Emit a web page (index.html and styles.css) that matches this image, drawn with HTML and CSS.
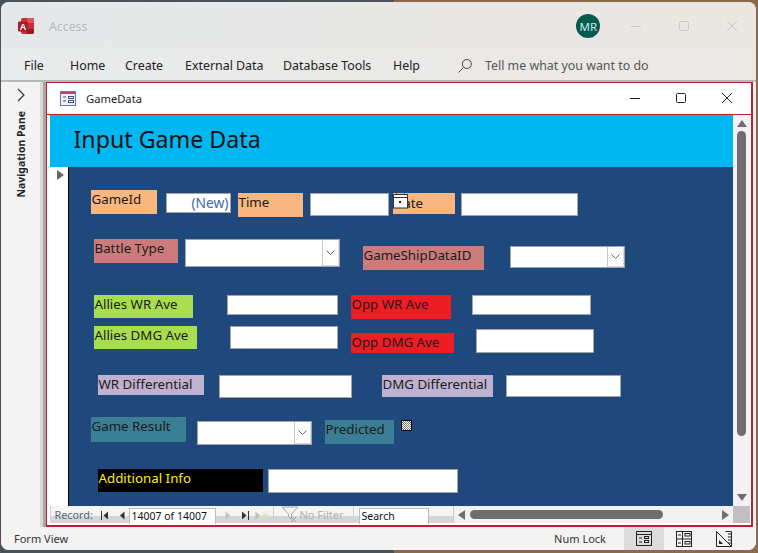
FILE: index.html
```html
<!DOCTYPE html>
<html lang="en">
<head>
<meta charset="utf-8">
<title>Access</title>
<link rel="stylesheet" href="styles.css">
</head>
<body>
<div class="app">
  <header class="titlebar">
    <svg class="logo" width="18" height="18" viewBox="0 0 18 18">
      <path d="M4 2.500 Q4 1 5.500 1 H16 Q17 1 17 2 V15 Q17 17 15 17 H6 Q4 17 4 15Z" fill="#c8303a"/>
      <path d="M10 1 H16 Q17 1 17 2 V6 H10Z" fill="#e0555c"/>
      <path d="M10 12 H17 V15 Q17 17 15 17 H10Z" fill="#8e1a24"/>
      <rect x="1" y="4.500" width="10" height="10" rx="1" fill="#a81c28"/>
      <text x="6" y="13" class="logo-letter" text-anchor="middle">A</text>
    </svg>
    <span class="app-name">Access</span>
    <span class="avatar">MR</span>
    <div class="win-controls">
      <svg width="12" height="12" viewBox="0 0 12 12"><path d="M1 6.500H11" stroke="#c9c9c7" fill="none"/></svg>
      <svg width="12" height="12" viewBox="0 0 12 12"><rect x="1.500" y="1.500" width="9" height="9" rx="1" stroke="#c9c9c7" fill="none"/></svg>
      <svg width="12" height="12" viewBox="0 0 12 12"><path d="M1 1L11 11M11 1L1 11" stroke="#c9c9c7" fill="none"/></svg>
    </div>
  </header>
  <nav class="ribbon">
    <span class="tab tab-file">File</span>
    <span class="tab tab-home">Home</span>
    <span class="tab tab-create">Create</span>
    <span class="tab tab-ext">External Data</span>
    <span class="tab tab-db">Database Tools</span>
    <span class="tab tab-help">Help</span>
    <svg class="search-icon" width="16" height="16" viewBox="0 0 16 16"><circle cx="9.800" cy="6" r="4.500" fill="none" stroke="#444"/><path d="M6.500 9.500L1.500 14.500" stroke="#444" fill="none"/></svg>
    <span class="tell">Tell me what you want to do</span>
  </nav>
  <main class="workspace">
    <aside class="navpane">
      <svg class="nav-chevron" width="8" height="14" viewBox="0 0 8 14"><path d="M1 1L7 7L1 13" fill="none" stroke="#333" stroke-width="1.200"/></svg>
      <span class="nav-label">Navigation Pane</span>
    </aside>
    <div class="nav-split"></div>
    <section class="formwin">
      <div class="formtitle">
        <svg class="form-icon" width="16" height="15" viewBox="0 0 16 15">
          <rect x="0.500" y="0.500" width="15" height="14" fill="#eef0f8" stroke="#6d78a0"/>
          <rect x="1" y="1" width="14" height="2" fill="#c2406a"/>
          <path d="M3 6H6M3 10H6" stroke="#44507a"/>
          <rect x="8.500" y="5.500" width="5" height="2" fill="#fff" stroke="#44507a"/>
          <rect x="8.500" y="9.500" width="5" height="2" fill="#fff" stroke="#44507a"/>
        </svg>
        <span class="form-name">GameData</span>
        <div class="form-controls">
          <svg width="12" height="12" viewBox="0 0 12 12"><path d="M1 6.500H11" stroke="#222" fill="none"/></svg>
          <svg width="12" height="12" viewBox="0 0 12 12"><rect x="1.500" y="1.500" width="9" height="9" rx="1" stroke="#222" fill="none"/></svg>
          <svg width="12" height="12" viewBox="0 0 12 12"><path d="M1 1L11 11M11 1L1 11" stroke="#222" fill="none"/></svg>
        </div>
      </div>
      <div class="formbody">
        <div class="content">
          <div class="form-main">
            <div class="form-header">Input Game Data</div>
            <div class="detail">
              <div class="selector"><span class="selector-arrow"></span></div>
              <div class="canvas">
                <span class="lbl orange l-gameid">GameId</span>
                <span class="field f-new">(New)</span>
                <span class="lbl orange l-time">Time</span>
                <span class="field f-time"></span>
                <span class="lbl orange l-date">Date</span>
                <svg class="calendar" width="16" height="16" viewBox="0 0 16 16">
                  <rect x="0.500" y="1.500" width="14" height="13.500" fill="#fff" stroke="#333"/>
                  <path d="M1 4.500H14" stroke="#333"/>
                  <path d="M3.500 0.500V2M11.500 0.500V2" stroke="#333"/>
                  <rect x="6" y="8" width="2" height="2" fill="#222"/>
                </svg>
                <span class="field f-date"></span>
                <span class="lbl rose l-battle">Battle Type</span>
                <span class="field combo f-battle"><span class="combo-btn"><svg width="9" height="5" viewBox="0 0 9 5"><path d="M0.500 0.500L4.500 4.500L8.500 0.500" fill="none" stroke="#666"/></svg></span></span>
                <span class="lbl rose l-ship">GameShipDataID</span>
                <span class="field combo f-ship"><span class="combo-btn"><svg width="9" height="5" viewBox="0 0 9 5"><path d="M0.500 0.500L4.500 4.500L8.500 0.500" fill="none" stroke="#666"/></svg></span></span>
                <span class="lbl green l-awr">Allies WR Ave</span>
                <span class="field f-awr"></span>
                <span class="lbl green l-admg">Allies DMG Ave</span>
                <span class="field f-admg"></span>
                <span class="lbl red l-owr">Opp WR Ave</span>
                <span class="field f-owr"></span>
                <span class="lbl red l-odmg">Opp DMG Ave</span>
                <span class="field f-odmg"></span>
                <span class="lbl lilac l-wrd">WR Differential</span>
                <span class="field f-wrd"></span>
                <span class="lbl lilac l-dmgd">DMG Differential</span>
                <span class="field f-dmgd"></span>
                <span class="lbl teal l-result">Game Result</span>
                <span class="field combo f-result"><span class="combo-btn"><svg width="9" height="5" viewBox="0 0 9 5"><path d="M0.500 0.500L4.500 4.500L8.500 0.500" fill="none" stroke="#666"/></svg></span></span>
                <span class="lbl teal l-pred">Predicted</span>
                <span class="check"></span>
                <span class="lbl black l-info">Additional Info</span>
                <span class="field f-info"></span>
              </div>
            </div>
          </div>
          <div class="vscroll">
            <span class="arrow-up"></span>
            <span class="vthumb"></span>
            <span class="arrow-down"></span>
          </div>
        </div>
        <div class="bottom">
          <div class="recordbar">
            <span class="rec-label">Record:</span>
            <svg class="nav-btn b-first" width="8" height="9" viewBox="0 0 8 9"><path d="M0.500 0V9" stroke="#333"/><path d="M7 0.500V8.500L2.500 4.500Z" fill="#333"/></svg>
            <svg class="nav-btn b-prev" width="6" height="9" viewBox="0 0 6 9"><path d="M5.500 0.500V8.500L1 4.500Z" fill="#333"/></svg>
            <span class="rec-input">14007 of 14007</span>
            <svg class="nav-btn b-next" width="6" height="9" viewBox="0 0 6 9"><path d="M0.500 0.500V8.500L5 4.500Z" fill="#c0c0c0"/></svg>
            <svg class="nav-btn b-last" width="8" height="9" viewBox="0 0 8 9"><path d="M7.500 0V9" stroke="#333"/><path d="M1 0.500V8.500L5.500 4.500Z" fill="#333"/></svg>
            <svg class="nav-btn b-new" width="14" height="9" viewBox="0 0 14 9"><path d="M0.500 0.500V8.500L5 4.500Z" fill="#c0c0c0"/><path d="M10 0.500V8.500M6 4.500H14M7.500 1.500L12.500 7.500M12.500 1.500L7.500 7.500" stroke="#eddcb8"/></svg>
            <span class="rec-sep sep-a"></span>
            <svg class="nav-btn b-filter" width="18" height="17" viewBox="0 0 18 17"><path d="M1 1H17L10.500 8V13L7.500 11V8Z" fill="none" stroke="#a8a8a8"/><path d="M10 11L15 16M15 11L10 16" stroke="#999"/></svg>
            <span class="no-filter">No Filter</span>
            <span class="rec-sep sep-b"></span>
            <span class="search-box">Search</span>
          </div>
          <div class="hscroll">
            <span class="arrow-left"></span>
            <span class="hthumb"></span>
            <span class="arrow-right"></span>
          </div>
          <div class="corner"></div>
        </div>
      </div>
    </section>
  </main>
  <footer class="statusbar">
    <span class="status-text">Form View</span>
    <span class="numlock">Num Lock</span>
    <span class="view-btn active">
      <svg width="16" height="15" viewBox="0 0 16 15"><rect x="0.500" y="0.500" width="15" height="14" fill="none" stroke="#222"/><path d="M0.500 3.500H15.500M3 7H6M3 11H6" stroke="#222"/><rect x="8.500" y="5.500" width="4" height="2" fill="none" stroke="#222"/><rect x="8.500" y="9.500" width="4" height="2" fill="none" stroke="#222"/></svg>
    </span>
    <span class="view-btn">
      <svg width="16" height="16" viewBox="0 0 16 16"><rect x="0.500" y="0.500" width="15" height="15" fill="none" stroke="#222"/><path d="M0.500 8H15.500M6.500 0.500V15.500" stroke="#222"/><rect x="9" y="2.500" width="5" height="2.500" fill="none" stroke="#222"/><rect x="9" y="10.500" width="5" height="2.500" fill="none" stroke="#222"/><path d="M2 4H5M2 12H5" stroke="#222"/></svg>
    </span>
    <span class="view-btn">
      <svg width="16" height="16" viewBox="0 0 16 16"><path d="M0.500 0.500L15.500 15.500H0.500Z" fill="none" stroke="#222"/><path d="M3 9L7 13H3Z" fill="#222"/><path d="M9.500 0.500H15.500V15.500M12 3H15.500M12 6H15.500M12 9H15.500M12 12H15.500" fill="none" stroke="#222"/></svg>
    </span>
  </footer>
</div>
</body>
</html>
```
FILE: styles.css
```css
* { box-sizing: border-box; }
html, body { margin: 0; padding: 0; height: 100%; overflow: hidden; }
body {
  background: linear-gradient(90deg, #4a5259 0 52%, #8b6a4c 52% 100%);
  font-family: "Noto Sans", "Open Sans", sans-serif;
  font-size: 12.400px;
  color: #222;
}
.app {
  width: 755px;
  height: 548px;
  margin: 2px 0 0 1px;
  border-radius: 8px;
  overflow: hidden;
  display: flex;
  flex-direction: column;
  background: #f3f3f3;
}

/* title bar */
.titlebar {
  height: 45px;
  display: flex;
  align-items: center;
  background: linear-gradient(90deg, #e5e8ea, #ebe7e2);
  flex: none;
  padding-top: 3px;
}
.logo { margin-left: 16px; }
.logo-letter { font: bold 9px "Liberation Sans", sans-serif; fill: #fff; }
.app-name { margin-left: 14px; margin-top: 1px; color: #b4b7b8; font-size: 12.300px; }
.avatar {
  margin-left: 489px;
  width: 24px;
  height: 24px;
  border-radius: 50%;
  background: #06594f;
  color: #cfe8e6;
  font-size: 11.500px;
  display: flex;
  align-items: center;
  justify-content: center;
}
.win-controls { margin-left: 30px; display: flex; gap: 36px; }

/* ribbon */
.ribbon {
  height: 35px;
  flex: none;
  position: relative;
  background: linear-gradient(90deg, #e8eaeb, #ebe8e4);
  border-bottom: 2px solid #b7b7b5;
}
.tab { position: absolute; top: 0; line-height: 37px; color: #222; }
.tab-file { left: 23px; }
.tab-home { left: 69px; }
.tab-create { left: 124px; }
.tab-ext { left: 184px; }
.tab-db { left: 282px; }
.tab-help { left: 392px; }
.search-icon { position: absolute; left: 456px; top: 11px; }
.tell { position: absolute; left: 484px; top: 0; line-height: 37px; color: #555; }

/* workspace */
.workspace { flex: 1; display: flex; min-height: 0; }
.navpane { width: 39px; flex: none; background: #f3f3f3; position: relative; }
.nav-chevron { position: absolute; left: 16px; top: 6px; }
.nav-label {
  position: absolute;
  left: 13px;
  top: 29px;
  writing-mode: vertical-rl;
  transform: rotate(180deg);
  font-size: 10.500px;
  font-weight: 700;
  color: #222;
  line-height: 14px;
}
.nav-split { width: 6px; flex: none; background: linear-gradient(90deg, #d8d8d8 0 3px, #a6a6a6 3px 100%); }
.formwin {
  flex: none;
  width: 707px;
  height: 445px;
  display: flex;
  flex-direction: column;
  background: #fff;
  border: 2px solid #c01e38;
  border-width: 1.500px 2px 2px 1.500px;
}
.formtitle {
  height: 31.500px;
  flex: none;
  display: flex;
  align-items: center;
  padding-left: 13px;
  border-bottom: 1.500px solid #c01e38;
}
.form-icon { flex: none; }
.form-name { margin-left: 10px; font-size: 11.200px; color: #222; }
.form-controls { margin-left: auto; margin-right: 18px; display: flex; gap: 34px; }

.formbody { flex: 1; display: flex; flex-direction: column; min-height: 0; padding: 0 1px 2px 2.500px; }
.content { flex: 1; display: flex; min-height: 0; }
.form-main { flex: 1; display: flex; flex-direction: column; min-width: 0; }
.form-header {
  height: 52px;
  flex: none;
  background: #00b7f1;
  color: #111;
  font-size: 23.200px;
  padding-left: 24px;
  line-height: 48px;
}
.detail { flex: 1; display: flex; min-height: 0; }
.selector { width: 19px; flex: none; background: #fff; border-right: 1.500px solid #000; position: relative; }
.selector-arrow {
  position: absolute;
  left: 7px;
  top: 3px;
  border-left: 7px solid #666;
  border-top: 5.500px solid transparent;
  border-bottom: 5.500px solid transparent;
}
.canvas { flex: 1; background: #1f497d; position: relative; }

/* Free canvas of form controls: offsets relative to the canvas (x-69, y-167) */
.lbl, .field, .check, .calendar { position: absolute; }
.lbl { color: #1a1a1a; font-size: 13.300px; line-height: 18px; padding-left: 1px; white-space: nowrap; overflow: hidden; }
.orange { background: #f9b67f; }
.rose { background: #cb7c7a; }
.green { background: #a8dd4e; }
.red { background: #ee1c25; }
.lilac { background: #bfb2d0; }
.teal { background: #3b7e94; }
.black { background: #000; color: #ffef00; }
.field { background: #fff; border: 1.500px solid #a3a3a3; }
.f-new { color: #3f6b9c; text-align: right; font-size: 13.800px; line-height: 18px; padding-right: 1px; }
.combo-btn {
  position: absolute;
  right: 0;
  top: 0;
  bottom: 0;
  width: 17px;
  display: flex;
  align-items: center;
  justify-content: center;
  border-left: 1px solid #c8c8c8;
  box-shadow: inset -1px -1px 0 #ddd;
}

.l-gameid { left: 22px; top: 23px; width: 66px; height: 24px; }
.f-new { left: 97px; top: 26px; width: 65px; height: 20px; }
.l-time { left: 169px; top: 26px; width: 65px; height: 24px; }
.f-time { left: 241px; top: 26px; width: 79px; height: 23px; }
.l-date { left: 324px; top: 26px; width: 62px; height: 21px; line-height: 20px; }
.calendar { left: 324px; top: 26px; }
.f-date { left: 392px; top: 26px; width: 117px; height: 23px; }
.l-battle { left: 25px; top: 72px; width: 84px; height: 24px; }
.f-battle { left: 116px; top: 72px; width: 155px; height: 28px; }
.l-ship { left: 294px; top: 79px; width: 121px; height: 24px; }
.f-ship { left: 441px; top: 79px; width: 115px; height: 22px; }
.l-awr { left: 25px; top: 128px; width: 99px; height: 23px; }
.f-awr { left: 158px; top: 128px; width: 111px; height: 20px; }
.l-admg { left: 25px; top: 159px; width: 103px; height: 23px; }
.f-admg { left: 161px; top: 159px; width: 108px; height: 23px; }
.l-owr { left: 282px; top: 128px; width: 100px; height: 24px; }
.f-owr { left: 403px; top: 128px; width: 119px; height: 20px; }
.l-odmg { left: 282px; top: 166px; width: 103px; height: 20px; }
.f-odmg { left: 407px; top: 162px; width: 118px; height: 24px; }
.l-wrd { left: 29px; top: 208px; width: 106px; height: 20px; }
.f-wrd { left: 150px; top: 208px; width: 133px; height: 23px; }
.l-dmgd { left: 313px; top: 208px; width: 111px; height: 22px; }
.f-dmgd { left: 437px; top: 208px; width: 115px; height: 22px; }
.l-result { left: 22px; top: 250px; width: 95px; height: 25px; }
.f-result { left: 128px; top: 254px; width: 115px; height: 24px; }
.l-pred { left: 256px; top: 253px; width: 69px; height: 24px; }
.check {
  left: 332px;
  top: 253px;
  width: 11px;
  height: 11px;
  border: 1px solid #000;
  background-color: #fff;
  background-image: conic-gradient(#777 25%, #fff 0 50%, #777 0 75%, #fff 0);
  background-size: 2px 2px;
}
.l-info { left: 29px; top: 302px; width: 165px; height: 23px; }
.f-info { left: 199px; top: 302px; width: 190px; height: 24px; }

/* scrollbars */
.vscroll { width: 17px; flex: none; background: #f2f2f2; display: flex; flex-direction: column; align-items: center; padding: 5px 0; }
.arrow-up { border-left: 5px solid transparent; border-right: 5px solid transparent; border-bottom: 7px solid #6e6e6e; flex: none; }
.vthumb { width: 9px; flex: none; height: 305px; margin-top: 4px; background: #6e6e6e; border-radius: 5px; }
.arrow-down { border-left: 5px solid transparent; border-right: 5px solid transparent; border-top: 7px solid #6e6e6e; margin-top: auto; flex: none; }

.bottom { height: 17px; flex: none; display: flex; }
.recordbar {
  width: 403px;
  flex: none;
  position: relative;
  background: linear-gradient(180deg, #f5f5f5 0 60%, #d6d6d8 60% 100%);
  border-left: 1px solid #cfcfcf;
}
.rec-label { position: absolute; left: 4px; top: 0; line-height: 18px; font-size: 10.800px; color: #5a6472; }
.nav-btn { position: absolute; top: 5px; }
.b-first { left: 50px; }
.b-prev { left: 68px; }
.b-next { left: 174px; }
.b-last { left: 190px; }
.b-new { left: 204px; }
.b-filter { left: 230px; top: 0; }
.rec-input, .search-box {
  position: absolute;
  top: 1.500px;
  height: 16px;
  background: #fff;
  border: 1px solid #bdbdbd;
  border-bottom: 0;
  color: #111;
  font-size: 10.500px;
  line-height: 15px;
  padding-left: 2px;
  white-space: nowrap;
}
.rec-input { left: 78px; width: 87px; }
.search-box { left: 308px; width: 70px; }
.rec-sep { position: absolute; top: 0; bottom: 0; width: 1px; background: #cfcfcf; }
.sep-a { left: 222px; }
.sep-b { left: 302px; }
.no-filter { position: absolute; left: 249px; top: 0; line-height: 18px; font-size: 11px; color: #b0b0b0; }
.hscroll {
  flex: 1;
  background: #f2f2f2;
  border-left: 1px solid #c8c8c8;
  display: flex;
  align-items: center;
  padding: 0 4px;
  min-width: 0;
}
.arrow-left { border-top: 5px solid transparent; border-bottom: 5px solid transparent; border-right: 7px solid #6e6e6e; flex: none; }
.hthumb { width: 193px; height: 9px; margin-left: 5px; background: #6e6e6e; border-radius: 5px; flex: none; }
.arrow-right { border-top: 5px solid transparent; border-bottom: 5px solid transparent; border-left: 7px solid #6e6e6e; margin-left: auto; flex: none; }
.corner { width: 17px; flex: none; background: #c0c0c4; }

/* status bar */
.statusbar {
  height: 23px;
  flex: none;
  display: flex;
  align-items: center;
  background: #f3f3f3;
}
.status-text { margin-left: 13px; font-size: 11px; color: #333; }
.numlock { margin-left: auto; font-size: 11px; color: #333; margin-right: 18px; }
.view-btn { width: 40px; height: 23px; display: flex; align-items: center; justify-content: center; }
.view-btn.active { background: #dcdcdc; }
.view-btn:last-child { margin-right: 12px; }
```
